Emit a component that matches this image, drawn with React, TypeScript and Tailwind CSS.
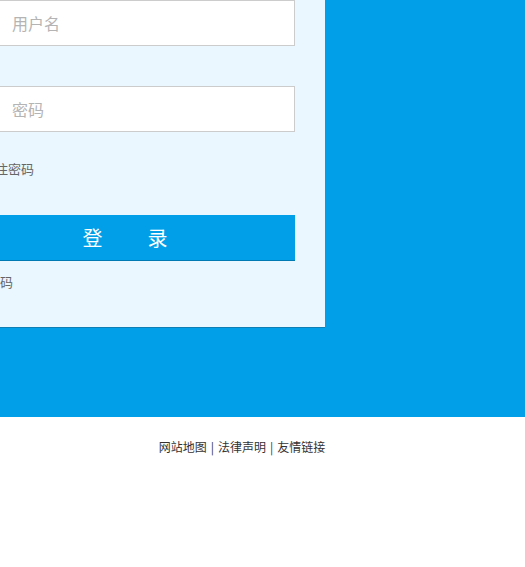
export default function App() {
  return (
    <div
      className="w-[525px] h-[567px] overflow-hidden bg-white"
      style={{ fontFamily: '"Noto Sans CJK SC", "Noto Sans", sans-serif' }}
    >
      <section className="h-[417px] bg-[#009fe8] overflow-hidden">
        <div className="ml-[-75px] w-[400px] h-[328px] bg-[#ebf7fe] border-b border-[#0d7fb5] px-[30px]">
          <input
            className="block w-[340px] h-[46px] bg-white border border-[#cccccc] pl-[56px] text-[16px] text-[#333] placeholder:text-[#b4b4b4] outline-none"
            placeholder="用户名"
          />
          <input
            type="password"
            className="block mt-[40px] w-[340px] h-[46px] bg-white border border-[#cccccc] pl-[56px] text-[16px] text-[#333] placeholder:text-[#b4b4b4] outline-none"
            placeholder="密码"
          />
          <label className="flex items-center h-[14px] mt-[30px] ml-[10px] text-[13px] leading-[14px] text-[#666]">
            <input type="checkbox" className="w-[13px] h-[13px] mr-[4px]" />
            记住密码
          </label>
          <button className="flex items-center justify-center mt-[39px] w-[340px] h-[46px] bg-[#009fe8] border-b border-[#0179b3] text-white text-[20px] leading-none">
            <span>登</span>
            <span className="ml-[45px]">录</span>
          </button>
          <div className="mt-[14px] ml-[6px] text-[13px] leading-[14px] text-[#666]">忘记密码</div>
        </div>
      </section>
      <footer className="pt-[23px] pr-[41px] flex justify-center items-center text-[12px] leading-[14px] text-[#333]">
        <span>网站地图</span>
        <span className="mx-[4px]">|</span>
        <span>法律声明</span>
        <span className="mx-[4px]">|</span>
        <span>友情链接</span>
      </footer>
    </div>
  );
}
